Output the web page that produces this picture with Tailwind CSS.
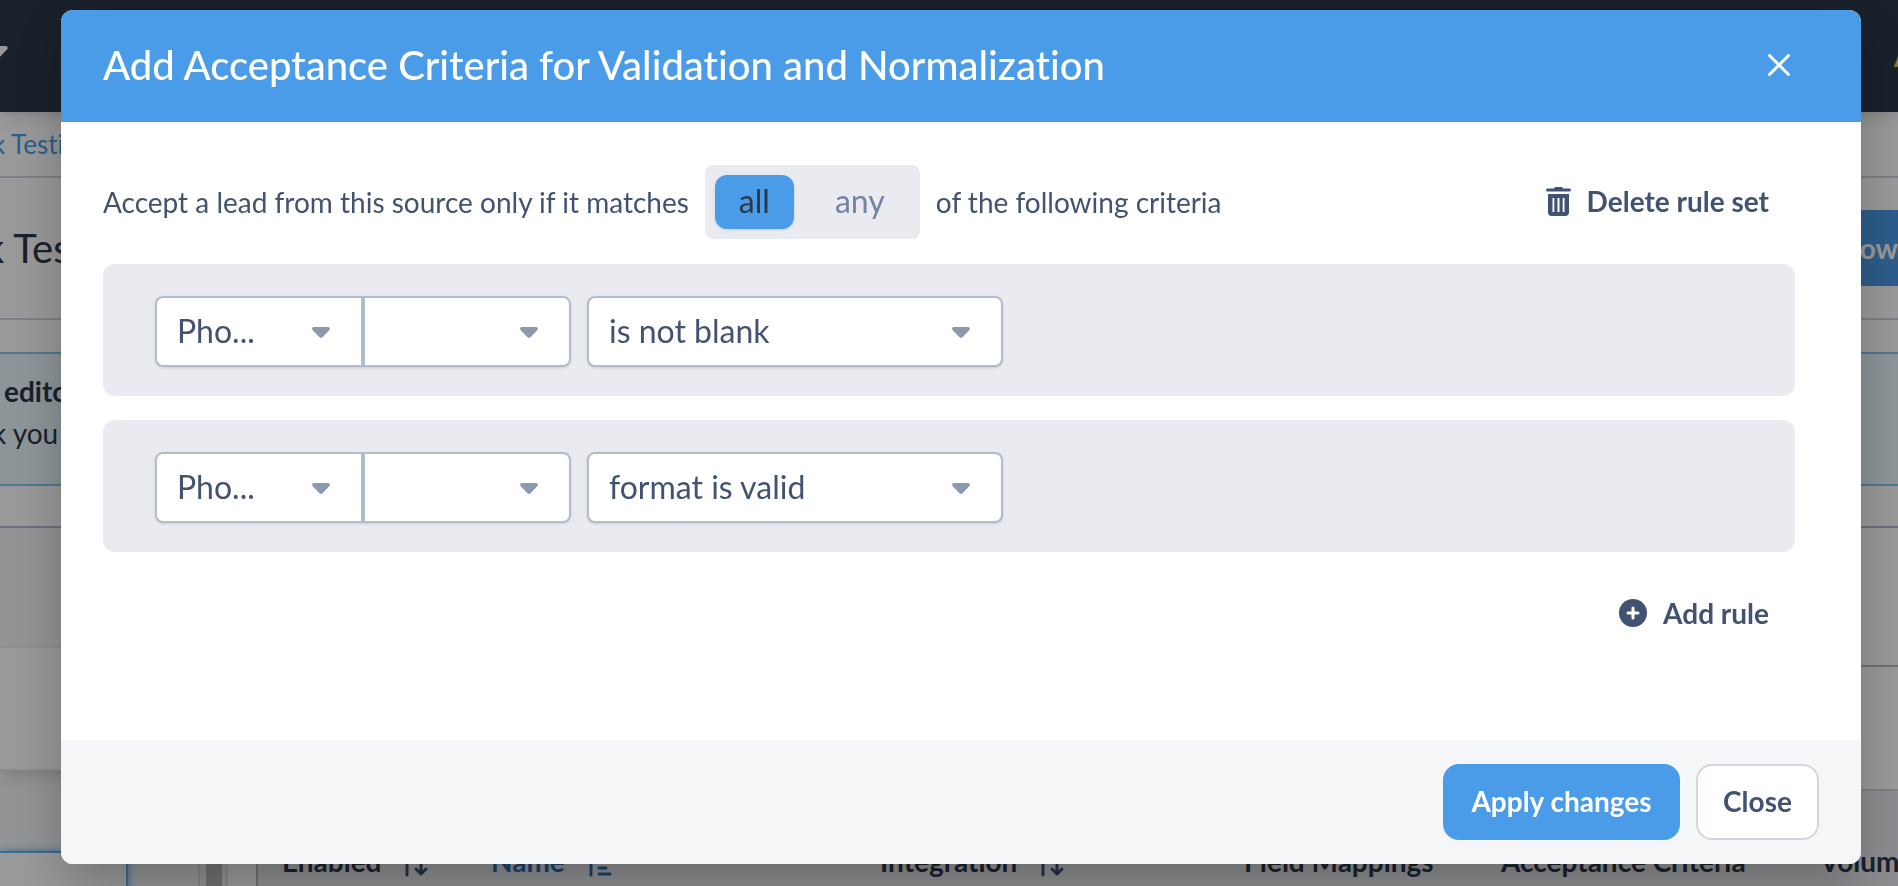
<!DOCTYPE html>
<html lang="en">
<head>
    <meta charset="UTF-8">
    <meta name="viewport" content="width=device-width, initial-scale=1.0">
    <title>Add Acceptance Criteria</title>
    <script src="https://cdn.jsdelivr.net/npm/@tailwindcss/browser@4"></script>
</head>
<body class="h-screen overflow-hidden bg-white font-['Lato','Open_Sans',sans-serif] [font-variant-ligatures:none] text-[#2d3748]">
    <svg class="hidden">
        <symbol id="caret" viewBox="0 0 18 11"><path d="M2 0h14c1.800 0 2.500 2 1.300 3.200l-6.800 7c-.9.900-2.100.900-3 0L.7 3.200C-.5 2 .2 0 2 0z" fill="currentColor"/></symbol>
        <symbol id="sort" viewBox="0 0 24 32"><path d="M2 30V2M16 2v27M11 24l5 5 5-5" fill="none" stroke="currentColor" stroke-width="3" stroke-linecap="round" stroke-linejoin="round"/></symbol>
        <symbol id="sorted" viewBox="0 0 24 32"><path d="M2 30V2M10 17.500h3M10 23h7M10 29h11" fill="none" stroke="currentColor" stroke-width="3" stroke-linecap="round"/></symbol>
    </svg>

    <!-- Page behind the dialog -->
    <div class="h-full overflow-hidden whitespace-nowrap" aria-hidden="true">
        <nav class="h-28 flex items-center justify-between bg-[#2d3748] shadow-lg">
            <svg class="w-5 h-3 -ml-3 -mt-2 text-white"><use href="#caret"/></svg>
            <span class="w-1 text-[28px] font-bold text-[#ecc94b]">A</span>
        </nav>
        <div class="h-[66px] flex items-center border-b-2 border-[#cfd6e0]">
            <a href="#" class="-ml-2 text-[26px] text-[#4a9be8]">k Testing</a>
        </div>
        <div class="h-[142px] flex items-center justify-between border-b-2 border-[#cfd6e0]">
            <h1 class="-ml-4 text-[40px] leading-[48px]">k Testing</h1>
            <button class="w-40 h-19 bg-[#4a9be8] text-right text-[28px] leading-8 font-bold text-white">Flow</button>
        </div>
        <div class="h-[208px] pt-8 border-b-2 border-[#b4bac8]">
            <div class="h-[134px] pt-4 border-y-2 border-[#82c6f5] bg-[#ebf8ff] text-[28px] leading-[42px]">
                <p class="ml-1 font-bold">editor</p>
                <p class="-ml-2">k you can</p>
            </div>
        </div>
        <div class="flex h-[400px]">
            <aside class="w-[200px] flex flex-col bg-[#f4f5f8] border-r-2 border-[#dcdee3]">
                <div class="h-30 shrink-0 border-b-2 border-[#eceef2]"></div>
                <div class="h-[123px] shrink-0 bg-white border-b-2 border-[#e4e6ea] shadow-lg"></div>
                <div class="mt-20 w-32 h-24 shrink-0 bg-white border-t-2 border-r-2 border-[#63b3ed] shadow-[0_0_8px_#63b3ed]"></div>
            </aside>
            <div class="w-7 px-[6px] bg-[#f0f1f3] border-r-2 border-[#e0e2e6]"><div class="w-4 h-full bg-[#bbb]"></div></div>
            <div class="w-7 bg-white"></div>
            <main class="flex-1 overflow-hidden border-l-2 border-[#b4bac8]">
                <div class="h-[139px] border-b-2 border-[#b4bac8]"></div>
                <div class="h-[124px] border-b-2 border-[#d2d6e1]"></div>
                <table class="w-[1800px] table-fixed bg-[#eaebf0] text-left text-[28px]">
                    <thead>
                        <tr class="h-[140px]">
                            <th class="w-[209px] pl-6"><span class="flex items-center gap-6">Enabled <svg class="w-6 h-8 text-[#425270]"><use href="#sort"/></svg></span></th>
                            <th class="w-[389px] pl-6 text-[#2b6cb0]"><span class="flex items-center gap-6">Name <svg class="w-6 h-8"><use href="#sorted"/></svg></span></th>
                            <th class="w-[364px] pl-6"><span class="flex items-center gap-6">Integration <svg class="w-6 h-8 text-[#425270]"><use href="#sort"/></svg></span></th>
                            <th class="w-[257px] pl-6">Field Mappings</th>
                            <th class="w-[319px] pl-6">Acceptance Criteria</th>
                            <th class="pl-6">Volume</th>
                        </tr>
                    </thead>
                </table>
            </main>
        </div>
    </div>

    <div class="fixed inset-0 flex items-start bg-black/40 pt-[10px] pl-[61px] pr-[37px]">
        <div role="dialog" aria-labelledby="dialog-title" class="w-full overflow-hidden rounded-xl bg-white text-[#425270] shadow-[0_20px_50px_rgba(0,0,0,0.25)]">
            <header class="h-28 pb-[2px] pl-[42px] pr-[67px] flex items-center justify-between bg-[#4a9be8] text-white">
                <h2 id="dialog-title" class="text-[40px] leading-[48px] font-medium">Add Acceptance Criteria for Validation and Normalization</h2>
                <button aria-label="Close dialog" class="p-1">
                    <svg class="w-[22px] h-[22px]" viewBox="0 0 22 22" fill="none" stroke="currentColor" stroke-width="3" stroke-linecap="round"><path d="M1.500 1.500l19 19M20.500 1.500l-19 19"/></svg>
                </button>
            </header>

            <div class="pt-[43px] pb-[106px] pl-[42px] pr-[66px]">
                <div class="flex items-center">
                    <p class="text-[28px]">Accept a lead from this source only if it matches</p>
                    <div class="mx-4 h-[74px] w-[215px] p-[10px] flex gap-4 rounded-lg bg-[#eaebf0] text-[32px]">
                        <button class="w-[79px] rounded-xl bg-[#4a9be8] text-[#2d3748] leading-8 pb-[2px] shadow-sm">all</button>
                        <button class="flex-1 text-[#7484a3] leading-8 pb-[2px]">any</button>
                    </div>
                    <p class="text-[28px]">of the following criteria</p>
                    <button class="ml-auto mr-[26px] flex items-center gap-4 text-[28px] leading-[42px] pb-[2px] font-bold">
                        <svg class="w-[25px] h-[29px]" viewBox="0 0 25 29" fill="currentColor">
                            <path d="M8 1.500C8.300.5 9 0 10 0h5c1 0 1.700.5 2 1.500h6.500a1.500 1.500 0 0 1 1 2.600c-.3.300-.6.400-1 .4h-22a1.500 1.500 0 0 1 0-3z"/>
                            <path fill-rule="evenodd" d="M2 7h21v18.500c0 2-1.500 3.500-3.500 3.500h-14C3.500 29 2 27.500 2 25.500zM6.500 11v14h1.800V11zm5 0v14h2V11zm5.200 0v14h1.800V11z"/>
                        </svg>
                        Delete rule set
                    </button>
                </div>

                <div class="mt-[25px] flex flex-col gap-6 text-[32px]">
                    <div class="pt-8 pb-[29px] pl-[52px] flex gap-4 rounded-xl bg-[#eaebf0]">
                        <div class="flex rounded-lg shadow-sm">
                            <div class="relative">
                                <select aria-label="Field" class="w-52 h-[71px] pl-5 pb-[2px] appearance-none rounded-l-lg border-2 border-[#b2bdcc] bg-white"><option>Pho...</option></select>
                                <svg class="absolute right-[33px] top-[31px] w-[18px] h-[11px] pointer-events-none text-[#8c9ab0]"><use href="#caret"/></svg>
                            </div>
                            <div class="relative">
                                <select aria-label="Field part" class="w-52 h-[71px] pl-5 pb-[2px] appearance-none rounded-r-lg border-2 border-[#b2bdcc] bg-white"><option></option></select>
                                <svg class="absolute right-[33px] top-[31px] w-[18px] h-[11px] pointer-events-none text-[#8c9ab0]"><use href="#caret"/></svg>
                            </div>
                        </div>
                        <div class="relative">
                            <select aria-label="Condition" class="w-[416px] h-[71px] pl-5 pb-[2px] appearance-none rounded-lg border-2 border-[#b2bdcc] bg-white shadow-sm"><option>is not blank</option></select>
                            <svg class="absolute right-[33px] top-[31px] w-[18px] h-[11px] pointer-events-none text-[#8c9ab0]"><use href="#caret"/></svg>
                        </div>
                    </div>
                    <div class="pt-8 pb-[29px] pl-[52px] flex gap-4 rounded-xl bg-[#eaebf0]">
                        <div class="flex rounded-lg shadow-sm">
                            <div class="relative">
                                <select aria-label="Field" class="w-52 h-[71px] pl-5 pb-[2px] appearance-none rounded-l-lg border-2 border-[#b2bdcc] bg-white"><option>Pho...</option></select>
                                <svg class="absolute right-[33px] top-[31px] w-[18px] h-[11px] pointer-events-none text-[#8c9ab0]"><use href="#caret"/></svg>
                            </div>
                            <div class="relative">
                                <select aria-label="Field part" class="w-52 h-[71px] pl-5 pb-[2px] appearance-none rounded-r-lg border-2 border-[#b2bdcc] bg-white"><option></option></select>
                                <svg class="absolute right-[33px] top-[31px] w-[18px] h-[11px] pointer-events-none text-[#8c9ab0]"><use href="#caret"/></svg>
                            </div>
                        </div>
                        <div class="relative">
                            <select aria-label="Condition" class="w-[416px] h-[71px] pl-5 pb-[2px] appearance-none rounded-lg border-2 border-[#b2bdcc] bg-white shadow-sm"><option>format is valid</option></select>
                            <svg class="absolute right-[33px] top-[31px] w-[18px] h-[11px] pointer-events-none text-[#8c9ab0]"><use href="#caret"/></svg>
                        </div>
                    </div>
                </div>

                <button class="mt-10 ml-auto mr-[26px] flex items-center gap-4 text-[28px] leading-[42px] font-bold">
                    <svg class="w-7 h-7" viewBox="0 0 28 28">
                        <circle cx="14" cy="14" r="14" fill="currentColor"/>
                        <path d="M14 9v10M9 14h10" stroke="#fff" stroke-width="3" stroke-linecap="round"/>
                    </svg>
                    Add rule
                </button>
            </div>

            <footer class="py-6 px-[42px] flex justify-end gap-4 bg-[#f5f6f8] text-[28px] font-bold">
                <button class="h-19 w-[237px] pb-[2px] rounded-2xl bg-[#4a9be8] text-white">Apply changes</button>
                <button class="h-19 w-[123px] pb-[2px] rounded-2xl border-2 border-[#d2d6e1] bg-white">Close</button>
            </footer>
        </div>
    </div>
</body>
</html>
